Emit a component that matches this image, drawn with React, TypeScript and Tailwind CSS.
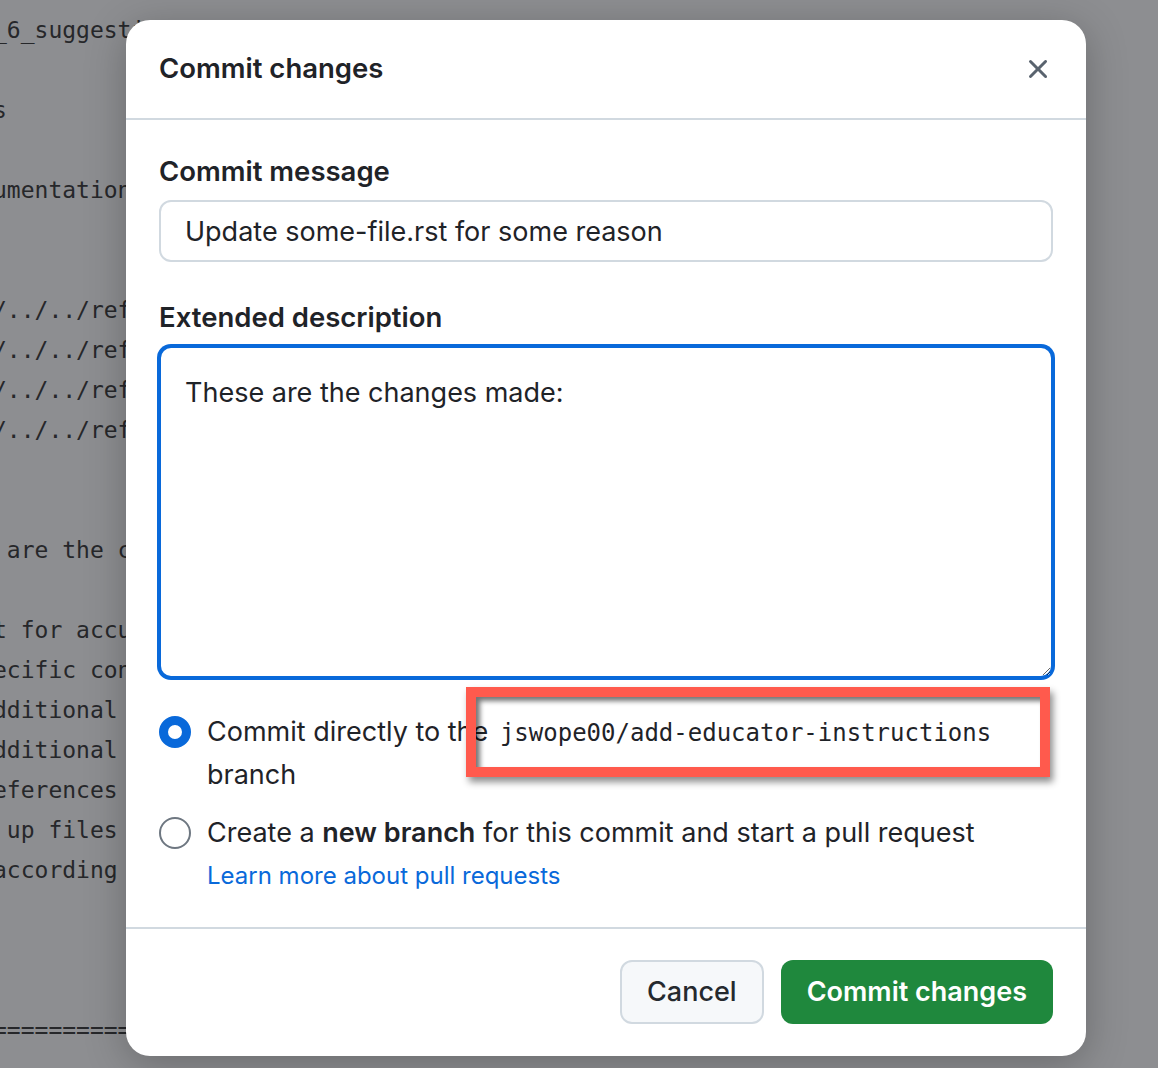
import React, { useState } from 'react';

const codeLines: string[] = [
  '_6_suggestions.rst',
  '',
  's',
  '',
  'umentation',
  '',
  '',
  '/../../references/',
  '/../../references/',
  '/../../references/',
  '/../../references/',
  '',
  '',
  ' are the changes made:',
  '',
  't for accuracy',
  'ecific content',
  'dditional notes',
  'dditional links',
  'eferences to',
  ' up files',
  'according to',
  '',
  '',
  '',
  '==============================',
];

function CloseIcon() {
  return (
    <svg width="32" height="32" viewBox="0 0 16 16" fill="#59636e" aria-hidden="true">
      <path d="M3.72 3.72a.75.75 0 0 1 1.06 0L8 6.94l3.22-3.22a.749.749 0 0 1 1.275.326.749.749 0 0 1-.215.734L9.06 8l3.22 3.22a.749.749 0 0 1-.326 1.275.749.749 0 0 1-.734-.215L8 9.06l-3.22 3.220a.751.751 0 0 1-1.042-.018.751.751 0 0 1-.018-1.042L6.94 8 3.72 4.78a.75.75 0 0 1 0-1.06Z" />
    </svg>
  );
}

function Radio({ checked }: { checked: boolean }) {
  return checked ? (
    <span className="mt-[5px] block h-[32px] w-[32px] shrink-0 rounded-full border-[9px] border-[#0969da] bg-white" />
  ) : (
    <span className="mt-[5px] block h-[32px] w-[32px] shrink-0 rounded-full border-2 border-[#6e7781] bg-white" />
  );
}

export default function App() {
  const [message, setMessage] = useState('Update some-file.rst for some reason');
  const [description, setDescription] = useState('These are the changes made:');
  const [direct, setDirect] = useState(true);

  return (
    <div className="relative h-[1068px] w-[1158px] overflow-hidden bg-[#8d8e91]">
      {/* page underneath the dialog */}
      <div
        className="-ml-[7px] pt-[10px] text-[23px] leading-[40px] text-[#26272a] whitespace-pre"
        style={{ fontFamily: '"DejaVu Sans Mono", monospace' }}
      >
        {codeLines.map((line, i) => (
          <div key={i} className="h-[40px]">
            {line}
          </div>
        ))}
      </div>

      <div
        className="absolute left-[126px] top-[20px] w-[960px] rounded-[24px] bg-white text-[#1f2328] shadow-[0_8px_40px_rgba(0,0,0,0.25)]"
        style={{ fontFamily: 'Inter, "Noto Sans", sans-serif' }}
      >
        <div className="flex h-[100px] items-center justify-between border-b-2 border-[#d1d9e0] pl-[33px] pr-[24px]">
          <h2 className="text-[27.5px] font-semibold">Commit changes</h2>
          <button type="button" className="flex h-[48px] w-[48px] items-center justify-center rounded-lg">
            <CloseIcon />
          </button>
        </div>

        <div className="px-[33px] pt-[30px] pb-[33px]">
          <label htmlFor="msg" className="block text-[27.5px] font-semibold leading-[42px]">
            Commit message
          </label>
          <input
            id="msg"
            type="text"
            value={message}
            onChange={(e) => setMessage(e.target.value)}
            className="mt-[8px] block h-[62px] w-full rounded-[12px] border-2 border-[#d1d9e0] bg-white px-[24px] text-[27px] text-[#1f2328] outline-none"
          />

          <label htmlFor="desc" className="mt-[34px] block text-[27.5px] font-semibold leading-[42px]">
            Extended description
          </label>
          <textarea
            id="desc"
            value={description}
            onChange={(e) => setDescription(e.target.value)}
            className="mt-[8px] block h-[332px] w-full rounded-[12px] border-2 border-[#0969da] bg-white px-[24px] pt-[24px] text-[27px] leading-[42px] text-[#1f2328] outline-none ring-2 ring-[#0969da]"
          />

          <div className="relative mt-[33px]">
            <label className="flex cursor-pointer items-start gap-[16px]" onClick={() => setDirect(true)}>
              <Radio checked={direct} />
              <span className="text-[27px] leading-[42px]">
                Commit directly to the{' '}
                <span className="ml-[4px] text-[24px]" style={{ fontFamily: '"DejaVu Sans Mono", monospace' }}>
                  jswope00/add-educator-instructions
                </span>{' '}
                branch
              </span>
            </label>

            <label className="mt-[16px] flex cursor-pointer items-start gap-[16px]" onClick={() => setDirect(false)}>
              <Radio checked={!direct} />
              <span className="flex flex-col">
                <span className="text-[27px] leading-[42px]">
                  Create a <strong className="font-semibold">new branch</strong> for this commit and start a pull request
                </span>
                <a href="#" className="mt-[4px] text-[24px] leading-[36px] text-[#0969da]">
                  Learn more about pull requests
                </a>
              </span>
            </label>

            {/* screenshot annotation */}
            <div className="pointer-events-none absolute left-[307px] top-[-24px] h-[90px] w-[584px] border-[10px] border-[#ff5a4d] shadow-[3px_5px_7px_rgba(0,0,0,0.45),inset_4px_4px_5px_rgba(0,0,0,0.55)]" />
          </div>
        </div>

        <div className="flex justify-end gap-[17px] border-t-2 border-[#d1d9e0] px-[33px] pt-[31px] pb-[32px]">
          <button
            type="button"
            className="h-[64px] rounded-[12px] border-2 border-[#d1d9e0] bg-[#f6f8fa] px-[25px] text-[27px] font-medium text-[#25292e]"
          >
            Cancel
          </button>
          <button
            type="button"
            className="h-[64px] rounded-[12px] bg-[#1f883d] px-[26px] text-[27px] font-semibold text-white"
          >
            Commit changes
          </button>
        </div>
      </div>
    </div>
  );
}
